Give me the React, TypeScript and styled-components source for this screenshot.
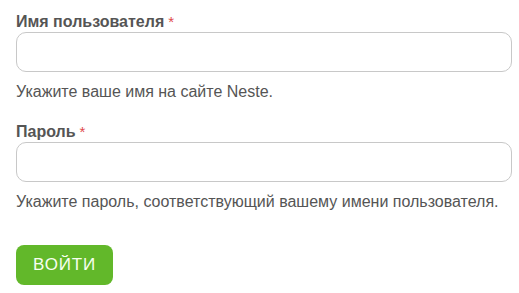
import styled, { createGlobalStyle } from 'styled-components';

const GlobalStyle = createGlobalStyle`
  body {
    margin: 0;
    background: #fff;
    font-family: "Liberation Sans", Arial, sans-serif;
  }
`

const LoginForm = styled.form`
  padding: 12px 7px 0 16px;
  display: flex;
  flex-direction: column;
`

const Field = styled.div`
  display: flex;
  flex-direction: column;
  margin-bottom: 21px;
`

const Label = styled.label`
  font-size: 16px;
  font-weight: bold;
  color: #555;
  line-height: 19px;
  margin-bottom: 1px;

  span {
    color: #e0484b;
    font-weight: normal;
    font-size: 15px;
    margin-left: 4px;
  }
`

const TextInput = styled.input`
  box-sizing: border-box;
  width: 496px;
  height: 40px;
  border: 1px solid #c8c8c8;
  border-radius: 10px;
  padding: 0 10px;
  font-size: 16px;
  outline: none;
`

const Help = styled.div`
  font-size: 16px;
  color: #555;
  line-height: 18px;
  margin-top: 11px;
`

const SubmitButton = styled.button`
  align-self: flex-start;
  width: 97px;
  height: 40px;
  margin-top: 13px;
  padding: 0;
  background-color: #62b82a;
  color: #f8fff0;
  border: none;
  border-radius: 8px;
  font-family: "Liberation Sans", Arial, sans-serif;
  font-size: 17px;
  letter-spacing: 0.8px;
  text-transform: uppercase;
  cursor: pointer;
`

const App = () => {
  return (
    <>
      <GlobalStyle />
      <LoginForm onSubmit={(e) => e.preventDefault()}>
        <Field>
          <Label htmlFor="name">Имя пользователя<span>*</span></Label>
          <TextInput id="name" type="text" />
          <Help>Укажите ваше имя на сайте Neste.</Help>
        </Field>
        <Field>
          <Label htmlFor="pass">Пароль<span>*</span></Label>
          <TextInput id="pass" type="password" />
          <Help>Укажите пароль, соответствующий вашему имени пользователя.</Help>
        </Field>
        <SubmitButton type="submit">Войти</SubmitButton>
      </LoginForm>
    </>
  );
};

export default App;
